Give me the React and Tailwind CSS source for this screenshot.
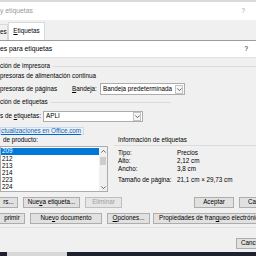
import React from 'react'

const font = { fontFamily: '"Liberation Sans", Arial, sans-serif' }

const Chevron = ({ dir = 'down' }) => (
  <svg width="7" height="7" viewBox="0 0 8 8" className="shrink-0">
    <path
      d={dir === 'down' ? 'M1.5 2.8 L4 5.3 L6.5 2.8' : 'M1.5 5.2 L4 2.7 L6.5 5.2'}
      fill="none"
      stroke="#404040"
      strokeWidth="0.9"
    />
  </svg>
)

const Combo = ({ value, className }) => (
  <div className={`flex items-center justify-between border border-[#adadad] bg-white pl-[2px] pr-[1px] ${className}`}>
    <span className="truncate">{value}</span>
    <div className="flex h-[9px] w-[8px] items-center justify-center border border-[#c4c4c4] bg-[#f5f5f5]">
      <Chevron />
    </div>
  </div>
)

const Btn = ({ children, className = '', disabled }) => (
  <div
    className={`flex h-[11px] shrink-0 items-center justify-center border whitespace-nowrap ${
      disabled ? 'border-[#bfbfbf] bg-[#e6e6e6] text-[#a0a0a0]' : 'border-[#adadad] bg-[#e1e1e1] text-black'
    } ${className}`}
  >
    {children}
  </div>
)

const Group = ({ children, className = '' }) => (
  <div className={`flex h-[10px] items-center gap-[3px] ${className}`}>
    <span className="whitespace-nowrap">{children}</span>
    <div className="h-px flex-1 bg-[#dcdcdc]" />
  </div>
)

const products = ['209', '212', '213', '214', '223', '224']

const InfoRow = ({ label, value, className = '' }) => (
  <div className={`flex h-[8px] items-center ${className}`}>
    <span className="w-[59px] shrink-0">{label}</span>
    <span className="whitespace-nowrap">{value}</span>
  </div>
)

export default function App() {
  return (
    <div
      style={font}
      className="flex h-[256px] w-[256px] flex-col overflow-hidden bg-[#f0f0f0] text-[6.3px] leading-none text-black"
    >
      <div className="h-[2px] bg-[#dadada]" />

      {/* outer dialog title */}
      <div className="flex h-[18px] items-center justify-between bg-white pr-[11px]">
        <span className="text-[6.8px] text-[#9a9a9a]">y etiquetas</span>
        <span className="text-[#9a9a9a]">?</span>
      </div>

      {/* tabs */}
      <div className="flex h-[20px] items-end">
        <div className="flex h-[16px] w-[8px] items-center border-t border-r border-[#d9d9d9] bg-[#f0f0f0]">es</div>
        <div className="flex h-[18px] w-[37px] items-center justify-center border-x border-t border-[#d9d9d9] bg-white">
          <span><span className="underline">E</span>tiquetas</span>
        </div>
      </div>

      {/* inner dialog title */}
      <div className="flex h-[17px] items-center justify-between border-t border-[#9c9c9c] bg-white pr-[8px]">
        <span className="text-[6.8px]">es para etiquetas</span>
        <span>?</span>
      </div>
      <div className="h-px bg-[#e3e3e3]" />

      <div className="h-[3px]" />
      <Group>ción de impresora</Group>
      <div className="flex h-[11px] items-center">presoras de alimentación continua</div>
      <div className="flex h-[14px] items-center">
        <span className="w-[72px] shrink-0">presoras de páginas</span>
        <span className="w-[28px] shrink-0">
          <span className="underline">B</span>andeja:
        </span>
        <Combo value="Bandeja predeterminada" className="h-[12px] w-[85px]" />
      </div>
      <div className="h-px" />
      <Group className="w-[171px]">ción de etiquetas</Group>
      <div className="h-[3px]" />
      <div className="flex h-[12px] items-center">
        <span className="w-[43px] shrink-0">
          s de <span className="underline">e</span>tiquetas:
        </span>
        <Combo value="APLI" className="h-[11px] w-[100px]" />
      </div>
      <div className="h-[5px]" />
      <div className="flex h-[8px]">
        <span className="flex items-center border border-[#c9dcee] pr-[2px] text-[#0066cc] underline">
          ctualizaciones en Office.com
        </span>
      </div>

      {/* product list + label info */}
      <div className="flex">
        <div className="flex w-[108px] shrink-0 flex-col">
          <div className="flex h-[10px] items-center pl-[3px]">de producto:</div>
          <div className="h-px" />
          <div className="flex h-[46px] border border-[#adadad] bg-white">
            <div className="flex-1 pt-px">
              {products.map((p, i) => (
                <div
                  key={p}
                  className={`flex h-[7.2px] items-center pl-px ${i === 0 ? 'bg-[#0078d7] text-white' : ''}`}
                >
                  {p}
                </div>
              ))}
            </div>
            <div className="flex w-[8px] flex-col items-center bg-[#f0f0f0] pt-px">
              <div className="flex h-[7px] items-center">
                <Chevron dir="up" />
              </div>
              <div className="mt-[2px] h-[8px] w-[6px] bg-[#cdcdcd]" />
              <div className="flex-1" />
              <div className="flex h-[7px] items-center">
                <Chevron />
              </div>
            </div>
          </div>
        </div>
        <div className="ml-[8px] flex flex-1 flex-col">
          <div className="flex h-[10px] items-center pl-[2px]">Información de etiquetas</div>
          <div className="ml-[-2px] border-t border-[#dcdcdc] pl-[4px] pt-[3px]">
            <InfoRow label="Tipo:" value="Precios" />
            <InfoRow label="Alto:" value="2,12 cm" />
            <InfoRow label="Ancho:" value="3,8 cm" />
            <InfoRow label="Tamaño de página:" value="21,1 cm × 29,73 cm" className="mt-[3px]" />
          </div>
        </div>
      </div>

      <div className="h-[5px]" />
      <div className="flex">
        <Btn className="w-[18px] border-l-0">rs...</Btn>
        <Btn className="ml-[5px] w-[57px]">
          <span>
            Nue<span className="underline">v</span>a etiqueta...
          </span>
        </Btn>
        <Btn className="ml-[5px] w-[37px]" disabled>
          Eliminar
        </Btn>
        <Btn className="ml-[72px] w-[40px]">Aceptar</Btn>
        <Btn className="ml-[5px] w-[40px] justify-start pl-[8px]">Cancelar</Btn>
      </div>

      <div className="h-[5px]" />
      <div className="flex">
        <Btn className="w-[25px] border-l-0 border-[#6f94bd]">primir</Btn>
        <Btn className="ml-[5px] w-[72px]">
          <span>
            Nue<span className="underline">v</span>o documento
          </span>
        </Btn>
        <Btn className="ml-[5px] w-[43px]">
          <span>
            <span className="underline">O</span>pciones...
          </span>
        </Btn>
        <Btn className="ml-[3px] w-[110px] justify-start border-[#8a8a8a] pl-[5px]">
          <span>
            Propiedades de fran<span className="underline">q</span>ueo electrónico
          </span>
        </Btn>
      </div>

      <div className="h-[3px]" />
      <div className="h-px bg-[#e0e0e0]" />
      <div className="h-[10px]" />
      <div className="flex justify-end">
        <Btn className="mr-[-20px] w-[40px] justify-start pl-[4px]">Cancelar</Btn>
      </div>
      <div className="h-[3px]" />
      <div className="flex h-[4px] bg-[#1e2230]">
        <div className="ml-[7px] w-[60px] bg-[#d8d8d8]" />
      </div>
    </div>
  )
}
